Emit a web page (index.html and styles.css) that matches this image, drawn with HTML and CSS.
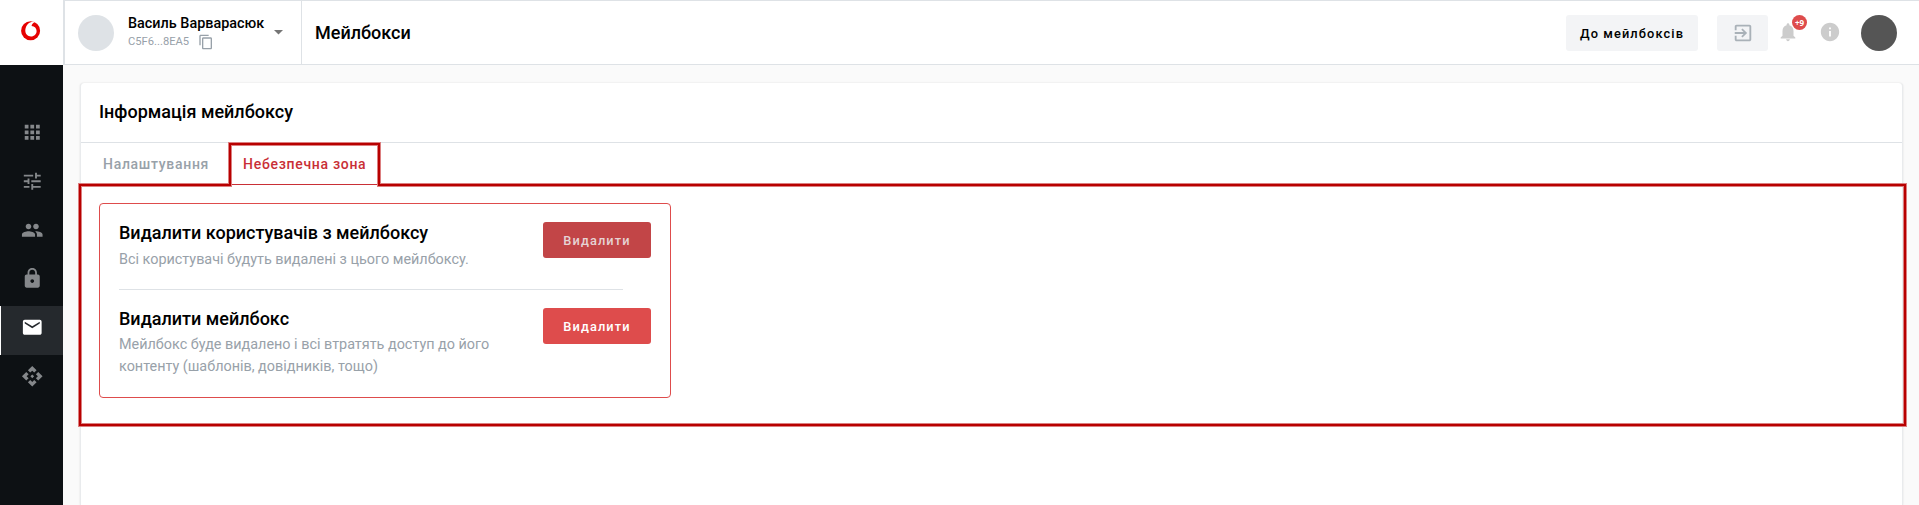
FILE: index.html
```html
<!DOCTYPE html>
<html lang="uk">
<head>
<meta charset="utf-8">
<title>Мейлбокси</title>
<link rel="stylesheet" href="styles.css">
</head>
<body>
<div class="app">
  <aside class="sidebar">
    <div class="brand">
      <svg width="20" height="20" viewBox="0 0 20 20"><circle cx="9.600" cy="9.700" r="9.500" fill="#e60000"/><path d="M10.600 4.900C10.700 3.300 12 1.700 13.800 1.200 12.800.8 11.400.7 10.400.9 7 1.700 4.300 5.500 4.300 9.600c0 3.500 2.500 5.900 5.700 5.900s5.600-2.400 5.600-5.500c0-2.900-2-4.700-5-5.100z" fill="#fff"/></svg>
    </div>
    <nav class="menu">
      <a class="item"><svg viewBox="0 0 24 24"><path d="M4 8h4V4H4v4zm6 12h4v-4h-4v4zm-6 0h4v-4H4v4zm0-6h4v-4H4v4zm6 0h4v-4h-4v4zm6-10v4h4V4h-4zm-6 4h4V4h-4v4zm6 6h4v-4h-4v4zm0 6h4v-4h-4v4z"/></svg></a>
      <a class="item"><svg viewBox="0 0 24 24"><path d="M3 17v2h6v-2H3zM3 5v2h10V5H3zm10 16v-2h8v-2h-8v-2h-2v6h2zM7 9v2H3v2h4v2h2V9H7zm14 4v-2H11v2h10zm-6-4h2V7h4V5h-4V3h-2v6z"/></svg></a>
      <a class="item"><svg viewBox="0 0 24 24"><path d="M16 11c1.660 0 2.990-1.340 2.990-3S17.660 5 16 5s-3 1.340-3 3 1.340 3 3 3zm-8 0c1.660 0 2.990-1.340 2.990-3S9.660 5 8 5 5 6.340 5 8s1.340 3 3 3zm0 2c-2.330 0-7 1.170-7 3.500V19h14v-2.500c0-2.330-4.670-3.500-7-3.500zm8 0c-.29 0-.62.020-.97.050 1.160.84 1.970 1.970 1.970 3.450V19h6v-2.500c0-2.330-4.670-3.500-7-3.500z"/></svg></a>
      <a class="item"><svg viewBox="0 0 24 24"><path d="M18 8h-1V6c0-2.760-2.240-5-5-5S7 3.240 7 6v2H6c-1.100 0-2 .9-2 2v10c0 1.100.9 2 2 2h12c1.100 0 2-.9 2-2V10c0-1.100-.9-2-2-2zm-6 9c-1.100 0-2-.9-2-2s.9-2 2-2 2 .9 2 2-.9 2-2 2zm3.100-9H8.900V6c0-1.710 1.390-3.100 3.100-3.100s3.100 1.390 3.100 3.100v2z"/></svg></a>
      <a class="item active"><svg viewBox="0 0 24 24"><path d="M20 4H4c-1.100 0-1.990.9-1.990 2L2 18c0 1.100.9 2 2 2h16c1.100 0 2-.9 2-2V6c0-1.100-.9-2-2-2zm0 4l-8 5-8-5V6l8 5 8-5v2z"/></svg></a>
      <a class="item"><svg viewBox="0 0 24 24"><path d="M14 12l-2 2-2-2 2-2 2 2zm-2-6l2.120 2.120 2.500-2.500L12 1 7.380 5.620l2.500 2.500L12 6zm-6 6l2.120-2.120-2.500-2.500L1 12l4.620 4.620 2.500-2.500L6 12zm12 0l-2.120 2.120 2.500 2.500L23 12l-4.620-4.620-2.500 2.500L18 12zm-6 6l-2.120-2.120-2.500 2.500L12 23l4.620-4.620-2.500-2.500L12 18z"/></svg></a>
    </nav>
  </aside>

  <div class="content">
    <header class="topbar">
      <div class="account">
        <div class="account-avatar"></div>
        <div class="account-text">
          <div class="account-name">Василь Варварасюк</div>
          <div class="account-code"><span>C5F6...8EA5</span>
            <svg width="16" height="16" viewBox="0 0 24 24"><path d="M16 1H4c-1.100 0-2 .9-2 2v14h2V3h12V1zm3 4H8c-1.100 0-2 .9-2 2v14c0 1.100.9 2 2 2h11c1.100 0 2-.9 2-2V7c0-1.100-.9-2-2-2zm0 16H8V7h11v14z"/></svg>
          </div>
        </div>
        <svg class="caret" width="9" height="5" viewBox="0 0 9 5"><path d="M0 0h9L4.500 4.500z"/></svg>
      </div>
      <h1 class="page-title">Мейлбокси</h1>
      <div class="actions">
        <button class="btn-light">До мейлбоксів</button>
        <button class="btn-exit"><svg width="22" height="22" viewBox="0 0 24 24"><path d="M10.090 15.590L11.500 17l5-5-5-5-1.410 1.410L12.670 11H3v2h9.670l-2.580 2.590zM19 3H5c-1.110 0-2 .9-2 2v4h2V5h14v14H5v-4H3v4c0 1.100.89 2 2 2h14c1.100 0 2-.9 2-2V5c0-1.100-.9-2-2-2z"/></svg></button>
        <div class="bell">
          <svg width="22" height="22" viewBox="0 0 24 24"><path d="M12 22c1.100 0 2-.9 2-2h-4c0 1.100.89 2 2 2zm6-6v-5c0-3.070-1.640-5.640-4.500-6.320V4c0-.83-.67-1.500-1.500-1.500s-1.500.67-1.500 1.500v.68C7.630 5.360 6 7.920 6 11v5l-2 2v1h16v-1l-2-2z"/></svg>
          <span class="badge">+9</span>
        </div>
        <svg class="info" width="22" height="22" viewBox="0 0 24 24"><path d="M12 2C6.480 2 2 6.480 2 12s4.480 10 10 10 10-4.480 10-10S17.520 2 12 2zm1 15h-2v-6h2v6zm0-8h-2V7h2v2z"/></svg>
        <div class="user-avatar"></div>
      </div>
    </header>

    <main class="main">
      <section class="card">
        <h2 class="card-title">Інформація мейлбоксу</h2>
        <div class="tabs">
          <a class="tab">Налаштування</a>
          <a class="tab selected">Небезпечна зона</a>
        </div>
        <div class="danger">
          <div class="row">
            <div class="row-text">
              <h3>Видалити користувачів з мейлбоксу</h3>
              <p>Всі користувачі будуть видалені з цього мейлбоксу.</p>
            </div>
            <button class="btn-danger pressed">Видалити</button>
          </div>
          <hr class="divider">
          <div class="row">
            <div class="row-text">
              <h3>Видалити мейлбокс</h3>
              <p class="tight">Мейлбокс буде видалено і всі втратять доступ до його контенту (шаблонів, довідників, тощо)</p>
            </div>
            <button class="btn-danger">Видалити</button>
          </div>
        </div>
      </section>
    </main>
  </div>
</div>
<svg class="highlight" width="1919" height="505" viewBox="0 0 1919 505">
  <path class="halo" d="M80 185H230V144H379V185H1905V425H80z"/>
  <path class="line" d="M80 185H230V144H379V185H1905V425H80z"/>
</svg>
</body>
</html>
```
FILE: styles.css
```css
* { box-sizing: border-box; }
body { margin: 0; font-family: Roboto, "Noto Sans", sans-serif; color: #000; background: #fafafa; overflow: hidden; }
h1, h2, h3, p { margin: 0; font-weight: 500; }
button { border: 0; padding: 0; font-family: inherit; }
svg { display: block; flex: none; }

.app { display: flex; height: 505px; }
.sidebar { width: 63px; flex: none; background: #0d1114; }
.brand { height: 65px; background: #fff; padding: 21px 0 0 21px; }
.menu { padding-top: 46px; }
.item { display: flex; align-items: center; justify-content: center; height: 48.8px; padding: 0 0 5.500px 2px; }
.item svg { width: 22.500px; height: 22.500px; fill: #85888b; }
.item:nth-child(n+4) { padding-bottom: 7px; }
.item.active { background: #25292d; border-left: 1px solid #fff; padding-left: 1px; }
.item.active svg { fill: #fff; }

.content { flex: 1; min-width: 0; display: flex; flex-direction: column; }
.topbar { display: flex; flex: none; height: 65px; background: #fff; border: solid #dee2e6; border-width: 1px 0 1px 2px; }
.account { display: flex; width: 237px; border-right: 1px solid #dee2e6; padding-left: 13px; }
.account-avatar { width: 36px; height: 36px; border-radius: 50%; background: #dee2e6; margin-top: 14px; }
.account-text { margin: 14px 0 0 14px; width: 146px; white-space: nowrap; }
.account-name { font-size: 14.400px; font-weight: 500; line-height: 18px; }
.account-code { display: flex; gap: 9px; font-size: 11.200px; line-height: 18px; color: #98a1a9; }
.account-code svg { margin-top: 1px; fill: #98a1a9; }
.caret { margin-top: 29px; fill: #757575; }
.page-title { font-size: 18px; line-height: 63px; margin-left: 13px; }
.actions { display: flex; margin: 14px 22px 0 auto; }
.btn-light { width: 132px; height: 36px; border-radius: 3px; background: #f3f4f6; font-size: 12.800px; font-weight: 500; letter-spacing: 1.100px; color: #000; }
.btn-exit { width: 51px; height: 36px; margin-left: 19px; border-radius: 3px; background: #f3f4f6; display: flex; align-items: center; justify-content: center; }
.btn-exit svg { fill: #a9b1b8; }
.bell { position: relative; margin: 6px 0 0 9px; }
.bell svg, .info { fill: #ccc; }
.badge { position: absolute; left: 15px; top: -6px; width: 15px; height: 15px; border-radius: 50%; background: #de4c4c; color: #fff; font-family: "Open Sans", Roboto, sans-serif; font-size: 8px; font-weight: 700; line-height: 15px; text-align: center; }
.info { margin: 6px 0 0 20px; }
.user-avatar { width: 36px; height: 36px; border-radius: 50%; background: #555; margin-left: 20px; }

.main { flex: 1; padding: 18px 17px 0; display: flex; }
.card { flex: 1; background: #fff; border-radius: 4px 4px 0 0; border: solid #e9ebed; border-width: 0 1px; margin-right: -1px; box-shadow: 0 0 2px rgba(0,0,0,.12); }
.card-title { height: 60px; padding-left: 18px; border-bottom: 1px solid #dee2e6; font-size: 18px; line-height: 58px; }
.tabs { display: flex; height: 42px; padding-left: 8px; }
.tab { padding: 0 14px; font-size: 14px; font-weight: 500; line-height: 42px; letter-spacing: .700px; color: #98a1a9; }
.tab.selected { margin-left: 6px; color: #c92f36; border-bottom: 1px solid #c92f36; }
.danger { width: 572px; height: 195px; margin: 18px 0 0 18px; padding: 18px 19px 0; border: 1px solid #de4c4c; border-radius: 4px; }
.row { display: flex; justify-content: space-between; }
.row-text { width: 400px; }
.row h3 { font-size: 18px; line-height: 22px; }
.row p { margin-top: 5px; font-size: 14.400px; font-weight: 400; line-height: 22px; color: #98a1a9; }
.row p.tight { margin-top: 4px; }
.btn-danger { width: 108px; height: 36px; border-radius: 3px; background: #de4c4c; color: #fff; font-size: 12.800px; font-weight: 500; letter-spacing: 1.100px; }
.btn-danger.pressed { background: #c24547; color: #e6d3d4; }
.divider { width: 504px; height: 1px; margin: 18px 0; border: 0; background: #dee2e6; }

.highlight { position: absolute; left: 0; top: 0; pointer-events: none; fill: none; }
.halo { stroke: #dc7f80; stroke-width: 4; }
.line { stroke: #b80000; stroke-width: 2; }
```
